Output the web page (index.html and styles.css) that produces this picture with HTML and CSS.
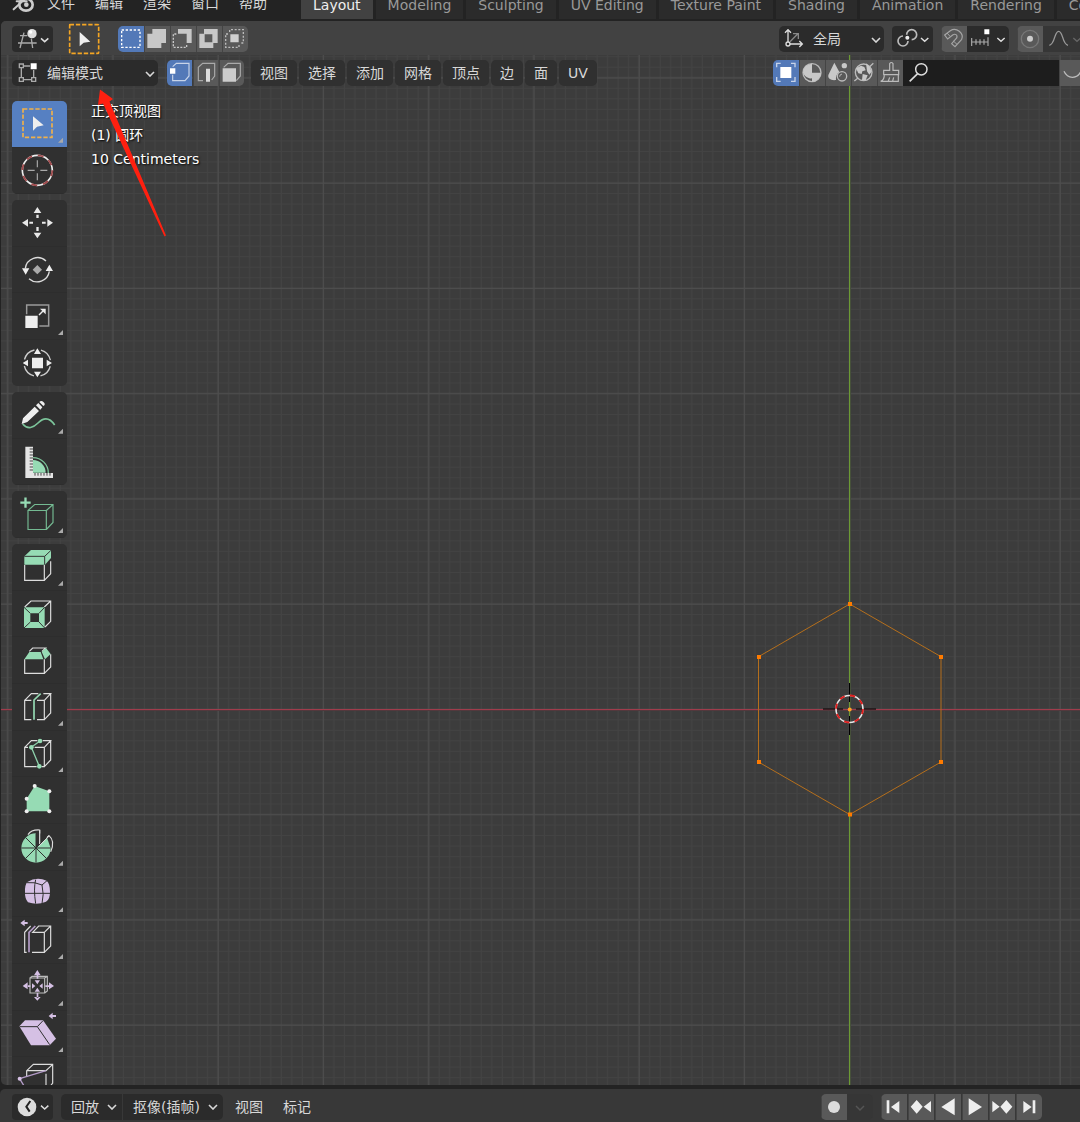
FILE: index.html
```html
<!DOCTYPE html>
<html lang="zh-CN">
<head>
<meta charset="utf-8">
<meta name="viewport" content="width=device-width, initial-scale=1">
<title>Blender</title>
<link rel="stylesheet" href="styles.css">
</head>
<body>
<svg class="defs" aria-hidden="true">
  <symbol id="chevron" viewBox="0 0 10 6"><path d="M1 1l4 4 4-4" fill="none" stroke="currentColor" stroke-width="1.6"/></symbol>
</svg>

<header class="topbar">
  <nav class="menus" aria-label="主菜单">
    <button class="menu logo" aria-label="Blender">
      <svg width="26" height="26" viewBox="36 -30 78 78"><path d="M41 28L74-2M50 4H80" fill="none" stroke="#ccc" stroke-width="6" stroke-linecap="round"/><ellipse cx="78" cy="14" rx="20" ry="18" fill="none" stroke="#ccc" stroke-width="8"/><circle cx="79" cy="14" r="7" fill="#ccc"/></svg>
    </button>
    <button class="menu">文件</button>
    <button class="menu">编辑</button>
    <button class="menu">渲染</button>
    <button class="menu">窗口</button>
    <button class="menu">帮助</button>
  </nav>
  <nav class="tabs" aria-label="工作区">
    <button class="tab active">Layout</button>
    <button class="tab">Modeling</button>
    <button class="tab">Sculpting</button>
    <button class="tab">UV Editing</button>
    <button class="tab">Texture Paint</button>
    <button class="tab">Shading</button>
    <button class="tab">Animation</button>
    <button class="tab">Rendering</button>
    <button class="tab">Compositing</button>
  </nav>
</header>

<main class="viewport">
  <svg class="scene" width="100%" height="100%" aria-hidden="true">
    <defs>
      <pattern id="minor" patternUnits="userSpaceOnUse" x="844.5" y="704" width="10.525" height="10.525"><path d="M5.2 0V10.6M0 5.2H10.6" stroke="#434343" stroke-width="1"/></pattern>
      <pattern id="major" patternUnits="userSpaceOnUse" x="799.7" y="659.4" width="105.25" height="105.25"><path d="M50 0V105.3M0 50H105.3" stroke="#4d4d4d" stroke-width="1.2"/></pattern>
    </defs>
    <g transform="translate(-1 -21)">
      <rect x="1" y="21" width="100%" height="100%" fill="url(#minor)"/>
      <rect x="1" y="21" width="100%" height="100%" fill="url(#major)"/>
      <rect x="0" y="709" width="4000" height="1" fill="#a03c4c"/>
      <rect x="0" y="710" width="4000" height="1" fill="#52393d"/>
      <rect x="849" y="0" width="1" height="4000" fill="#6c9a34"/>
      <rect x="850" y="0" width="1" height="4000" fill="#46503a"/>
      <path d="M849.7 604L941 656.7V762L849.7 814.5 758.5 762V656.7Z" fill="none" stroke="#b56f1c"/>
      <path d="M823 709H843M856 709H876" stroke="#1c1516" stroke-width="1.4"/>
      <path d="M849.5 683V702M849.5 716V735" stroke="#000"/>
      <circle cx="849.5" cy="709" r="13.5" fill="none" stroke="#e6e6e6" stroke-width="1.6"/>
      <circle cx="849.5" cy="709" r="13.5" fill="none" stroke="#e01c1c" stroke-width="1.8" stroke-dasharray="5.3 5.3"/>
      <path d="M848 602h4v4h-4zM939 655h4v4h-4zM939 760h4v4h-4zM848 812.500h4v4h-4zM757 760h4v4h-4zM757 655h4v4h-4z" fill="#ff7b00"/>
      <circle cx="849.7" cy="709.4" r="2" fill="#ffa028"/>
    </g>
  </svg>

  <div class="row settings">
    <button class="btn dark" aria-label="编辑器类型"><svg width="41" height="26" viewBox="36 78 123 78"><g fill="none" stroke="#aaa" stroke-width="4"><path d="M60 107H82M54 129H110M72 98L60 144M94 116L98 144"/></g><circle cx="96" cy="101" r="14" fill="#ddd"/><circle cx="92" cy="96" r="5" fill="#fff"/><path d="M123 115l11 10 11-10" fill="none" stroke="#ddd" stroke-width="4.500"/></svg></button>
    <button class="btn active-tool" aria-label="框选"><svg width="32" height="32" viewBox="204 67 96 96"><rect x="209" y="72" width="87" height="86" fill="none" stroke="#f5a623" stroke-width="5" stroke-dasharray="13 5.600"/><path d="M239 94V137L251 126 271 123Z" fill="#eee"/></svg></button>
    <div class="group modes">
      <button class="btn on" aria-label="设置"><svg width="26" height="26" viewBox="354 78 78 78"><rect x="365" y="90" width="55" height="52" fill="none" stroke="#fff" stroke-width="4" stroke-dasharray="7 5"/></svg></button>
      <button class="btn gray" aria-label="扩展"><svg width="26" height="26" viewBox="432 78 78 78"><path d="M457 87H498V129H484V144H442V101H457Z" fill="#c8c8c8"/></svg></button>
      <button class="btn gray" aria-label="减去"><svg width="26" height="26" viewBox="510 78 78 78"><path d="M534 87H575V129H560V101H534Z" fill="#c8c8c8"/><path d="M529 102H520V142H560V133" fill="none" stroke="#c8c8c8" stroke-width="4" stroke-dasharray="6 4"/></svg></button>
      <button class="btn gray" aria-label="反转"><svg width="26" height="26" viewBox="588 78 78 78"><path fill-rule="evenodd" d="M612 87H653V129H640V144H598V101H612ZM614 103V127H637V103Z" fill="#c8c8c8"/></svg></button>
      <button class="btn gray" aria-label="相交"><svg width="26" height="26" viewBox="666 78 78 78"><path d="M691 103H716V127H691Z" fill="#d0d0d0"/><path d="M689 96V89H730V129H722M684 102H677V142H717V134" fill="none" stroke="#bbb" stroke-width="4" stroke-dasharray="6 5"/></svg></button>
    </div>
    <div class="right">
      <label class="pick orientation">
        <svg width="24" height="26" viewBox="124 78 72 78" aria-hidden="true"><g fill="none" stroke="#ddd" stroke-width="4"><path d="M145 126V91M136 98L145 89 154 98M150 132H186M179 123L188 132 179 141"/><circle cx="145" cy="132" r="6"/></g><path d="M151 125L174 102M160 101H176V117" fill="none" stroke="#888" stroke-width="4"/></svg>
        <select aria-label="变换坐标系"><option>全局</option></select>
        <svg class="chev"><use href="#chevron"/></svg>
      </label>
      <button class="btn dark" aria-label="轴心点"><svg width="41" height="26" viewBox="457 78 123 78"><g fill="none" stroke="#bbb" stroke-width="5"><path d="M501 104A15 15 0 1 1 516 119M490 108A15 15 0 1 0 505 123"/></g><circle cx="503" cy="113" r="6" fill="#eee"/><path d="M544 114l11 10 11-10" fill="none" stroke="#ddd" stroke-width="4.500"/></svg></button>
      <div class="group">
        <button class="btn gray" aria-label="吸附"><svg width="26" height="26" viewBox="604 78 78 78"><path d="M615 105L632 92C650 80 674 100 666 118L646 140 636 131 651 114C655 104 646 100 639 105L624 117Z" fill="none" stroke="#a5a5a5" stroke-width="3.500"/><path d="M622 99L632 110M641 123L652 133" stroke="#a5a5a5" stroke-width="3"/></svg></button>
        <button class="btn dark" aria-label="吸附至"><svg width="42" height="26" viewBox="682 78 126 78"><path d="M695 126H746M696 114V138M709 118V134M721 118V134M733 118V134M745 112V138" stroke="#aaa" stroke-width="3.500"/><path d="M734 88H749V103H734Z" fill="#fff"/><path d="M773 114l11 10 11-10" fill="none" stroke="#ddd" stroke-width="4.500"/></svg></button>
      </div>
      <div class="group cut">
        <button class="btn gray" aria-label="比例化编辑"><svg width="26" height="26" viewBox="831 78 78 78"><circle cx="870" cy="117" r="26" fill="none" stroke="#777" stroke-width="4"/><circle cx="870" cy="116" r="9" fill="#ccc"/></svg></button>
        <button class="btn faded" aria-label="衰减"><svg width="37" height="26" viewBox="909 78 111 78"><path d="M928 136C946 132 942 94 956 94S966 132 984 136" fill="none" stroke="#999" stroke-width="4"/><path d="M1000 114l11 10 11-10" fill="none" stroke="#666" stroke-width="4"/></svg></button>
      </div>
    </div>
  </div>

  <div class="row header">
    <label class="pick mode">
      <svg width="26" height="26" viewBox="45 180 78 78" aria-hidden="true"><g fill="none" stroke="#aaa" stroke-width="4"><path d="M58 192h12v11H58zM58 233h12v11H58zM95 233h12v11H95zM64 205V231M72 239H93M101 210V231M72 198H90"/></g><path d="M92 190H110V208H92Z" fill="#fff"/></svg>
      <select aria-label="模式"><option>编辑模式</option></select>
      <svg class="chev"><use href="#chevron"/></svg>
    </label>
    <div class="group selmode">
      <button class="btn on" aria-label="顶点选择"><svg width="25" height="26" viewBox="499 180 75 78"><path d="M516 200L527 190H565V228L553 242H516V224" fill="none" stroke="#c7d3e8" stroke-width="3.500"/><path d="M508 205H524V221H508Z" fill="#fff"/></svg></button>
      <button class="btn gray" aria-label="边选择"><svg width="25" height="26" viewBox="576 180 75 78"><path d="M606 242H592V202L605 190H641V228L632 240" fill="none" stroke="#aaa" stroke-width="3.500"/><path d="M615 206H627V245H615Z" fill="#ddd"/></svg></button>
      <button class="btn gray" aria-label="面选择"><svg width="25" height="26" viewBox="654 180 75 78"><path d="M668 202L681 190H718V228L706 242" fill="none" stroke="#aaa" stroke-width="3.500"/><path d="M665 205H705V245H665Z" fill="#ccc"/></svg></button>
    </div>
    <nav class="view-menus" aria-label="视图菜单">
      <button class="vmenu">视图</button>
      <button class="vmenu">选择</button>
      <button class="vmenu">添加</button>
      <button class="vmenu">网格</button>
      <button class="vmenu">顶点</button>
      <button class="vmenu">边</button>
      <button class="vmenu">面</button>
      <button class="vmenu">UV</button>
    </nav>
    <div class="right joined">
      <button class="btn on first" aria-label="物体"><svg width="26" height="26" viewBox="98 180 78 78"><path d="M109 202V190H121M152 190H164V202M164 231V244H152M121 244H109V231" fill="none" stroke="#c7d3e8" stroke-width="4"/><path d="M120 201H153V234H120Z" fill="#fff"/></svg></button>
      <button class="btn gray" aria-label="材质"><svg width="26" height="26" viewBox="176 180 78 78"><circle cx="215" cy="218" r="27" fill="none" stroke="#bbb" stroke-width="4"/><path d="M215 218V191A27 27 0 0 0 188 218ZM215 218H242A27 27 0 0 1 215 245ZM215 191A27 27 0 0 0 188 218C194 232 208 236 215 235Z" fill="#c8c8c8"/></svg></button>
      <button class="btn gray" aria-label="场景"><svg width="26" height="26" viewBox="254 180 78 78"><path d="M282 188L297 216C288 222 286 232 287 240C272 242 262 236 264 225Z" fill="#c8c8c8"/><circle cx="312" cy="197" r="8" fill="#c8c8c8"/><circle cx="305" cy="229" r="14" fill="none" stroke="#bbb" stroke-width="4"/><path d="M298 230A8 8 0 0 1 305 222" fill="none" stroke="#bbb" stroke-width="3"/></svg></button>
      <button class="btn gray" aria-label="世界"><svg width="26" height="26" viewBox="332 180 78 78"><circle cx="370" cy="217" r="25" fill="none" stroke="#bbb" stroke-width="4"/><path d="M342 243L354 233M387 201L399 190" stroke="#bbb" stroke-width="4"/><path d="M347 205L362 197 372 201 376 211 366 214 364 222 354 220ZM377 190L388 200 394 215 387 224 380 214ZM367 222L382 226 376 241 365 240Z" fill="#c8c8c8"/></svg></button>
      <button class="btn gray" aria-label="笔刷"><svg width="26" height="26" viewBox="410 180 78 78"><path d="M448 211V191Q453 184 458 191V211H475V224H430V211ZM432 226C431 238 427 242 421 244H474V226M444 243L448 232M457 243L460 232" fill="none" stroke="#bbb" stroke-width="3.500"/></svg></button>
      <label class="search">
        <svg width="30" height="26" viewBox="488 180 90 78" aria-hidden="true"><circle cx="543" cy="208" r="17" fill="none" stroke="#ddd" stroke-width="4.500"/><path d="M532 221L508 244" stroke="#ddd" stroke-width="5"/></svg>
        <input type="search" aria-label="搜索">
      </label>
      <button class="btn gray" aria-label="下拉"><svg width="21" height="26" viewBox="956 180 63 78"><path d="M971 214C982 238 1010 238 1022 214" fill="none" stroke="#bbb" stroke-width="4"/></svg></button>
    </div>
  </div>

  <div class="body">
    <div class="shelf" role="toolbar" aria-label="工具栏">
      <div class="tools two">
        <button class="tool on more" aria-label="框选工具"><svg viewBox="36 33 162 140"><rect x="69" y="57" width="87" height="85" fill="none" stroke="#f0b04a" stroke-width="5" stroke-dasharray="13 5.500"/><path d="M99 79V122L111 110 131 106Z" fill="#eee"/></svg></button>
        <button class="tool" aria-label="游标"><svg viewBox="36 173 162 140"><circle cx="112" cy="240" r="45" fill="none" stroke="#eee" stroke-width="5"/><circle cx="112" cy="240" r="45" fill="none" stroke="#a04a4c" stroke-width="5.500" stroke-dasharray="17.670 17.670"/><path d="M83 240H104M121 240H142M112 210V231M112 249V270" stroke="#aaa" stroke-width="3.500"/></svg></button>
      </div>
      <div class="tools four">
        <button class="tool" aria-label="移动"><svg viewBox="36 330 162 140"><path d="M101 369L112 351 124 369ZM101 428L112 445 124 428ZM84 387L66 398 84 410ZM142 387L159 398 142 410ZM109 374H116V384H109ZM109 411H116V423H109ZM88 395H99V401H88ZM126 395H137V401H126Z" fill="#e8e8e8"/></svg></button>
        <button class="tool" aria-label="旋转"><svg viewBox="36 470 162 140"><path d="M76 534A37 37 0 0 1 138 512M148 543A37 37 0 0 1 87 565" fill="none" stroke="#ddd" stroke-width="4"/><path d="M66 534H88L77 553ZM137 542H159L148 523Z" fill="#eee"/><path d="M112 524L126 538 112 552 98 538Z" fill="#aaa"/></svg></button>
        <button class="tool more" aria-label="缩放"><svg viewBox="36 9 162 140"><path d="M80 73V45H146V108H118" fill="none" stroke="#999" stroke-width="4.500"/><path d="M76 77H113V114H76Z" fill="#eee"/><path d="M117 75L129 63" stroke="#eee" stroke-width="4"/><path d="M120 56H137V73Z" fill="#eee"/></svg></button>
        <button class="tool" aria-label="变换"><svg viewBox="36 148 162 140"><circle cx="112" cy="217" r="40" fill="none" stroke="#ccc" stroke-width="4" stroke-dasharray="42.800 20" stroke-dashoffset="-10"/><path d="M96 201H129V233H96ZM102 190L112 173 123 190ZM102 243L112 260 123 243ZM84 207L68 217 84 227ZM140 207L156 217 140 227Z" fill="#eee"/></svg></button>
      </div>
      <div class="tools two">
        <button class="tool more" aria-label="标注"><svg viewBox="36 306 162 140"><path d="M68 402C84 420 100 413 114 399S146 378 164 405" fill="none" stroke="#7cc49a" stroke-width="5"/><path d="M65 402L69 385 104 350 117 363 82 396ZM108 346L115 339 127 352 121 359ZM118 336Q124 330 131 337T130 348Z" fill="#eee"/></svg></button>
        <button class="tool" aria-label="测量"><svg viewBox="36 446 162 140"><path d="M99 509A38 38 0 0 1 137 547H99Z" fill="#96dbb4"/><path d="M99 502A46 46 0 0 1 145 548" fill="none" stroke="#7cc49a" stroke-width="4"/><path d="M76 469H99V548H159V563H76Z" fill="#e4e4e4"/><path d="M89 476H99M89 485H99M89 494H99M89 503H99M89 512H99M89 521H99M89 530H99M89 539H99M105 548V556M114 548V556M123 548V556M132 548V556M141 548V556M150 548V556" stroke="#444" stroke-width="3"/></svg></button>
      </div>
      <div class="tools one">
        <button class="tool more" aria-label="添加立方体"><svg viewBox="36 603 162 140"><path d="M84 661H139V718H84ZM84 661L104 643H159V697L139 718M139 661L159 643" fill="none" stroke="#74ba92" stroke-width="3.500"/><path d="M73 622H80V634H92V641H80V653H73V641H61V634H73Z" fill="#96dbb4"/></svg></button>
      </div>
      <div class="tools many">
        <button class="tool more" aria-label="挤出选区"><svg viewBox="36 12 162 140"><path d="M74 75V121H133V75M133 121L152 101V64" fill="none" stroke="#ddd" stroke-width="3.500"/><path d="M73 49L93 30H153V54L135 74H73Z" fill="#96dbb4"/><path d="M73 49H134L153 31M134 49V74" fill="none" stroke="#333" stroke-width="3"/></svg></button>
        <button class="tool" aria-label="内插面"><svg viewBox="36 152 162 140"><path d="M74 200L93 182H152V243L135 260M133 200L152 182" fill="none" stroke="#ddd" stroke-width="3.500"/><path fill-rule="evenodd" d="M72 201H134V263H72ZM91 219V245H117V219Z" fill="#96dbb4"/><path d="M72 201L91 219M134 201L117 219M72 263L91 245M134 263L117 245" stroke="#333" stroke-width="3"/></svg></button>
        <button class="tool" aria-label="倒角"><svg viewBox="36 292 162 140"><path d="M74 359V401H133V359M133 401L152 382V344M88 335L98 325H137L126 335" fill="none" stroke="#ddd" stroke-width="3.500"/><path d="M88 337H122L130 359H73ZM125 336L138 325 152 343 135 359Z" fill="#96dbb4"/></svg></button>
        <button class="tool more" aria-label="环切"><svg viewBox="36 432 162 140"><path d="M94 481H74V539H94M74 481L94 461H115M111 481H133V539H111M133 481L152 461H130M152 461V519L133 539" fill="none" stroke="#ddd" stroke-width="3.500"/><path d="M102 539V480L122 461" fill="none" stroke="#96dbb4" stroke-width="5"/></svg></button>
        <button class="tool more" aria-label="切割"><svg viewBox="36 572 162 140"><path d="M84 621H74V679H110M74 621L94 601H112M104 621H133V679H125M133 621L152 601H128M152 601V659L133 679" fill="none" stroke="#ddd" stroke-width="3.500"/><path d="M120 602L94 621 118 678" fill="none" stroke="#8ccfaa" stroke-width="4"/><g fill="#96dbb4"><circle cx="120" cy="602" r="7"/><circle cx="94" cy="621" r="7"/><circle cx="118" cy="678" r="7"/></g></svg></button>
        <button class="tool" aria-label="多边形建形"><svg viewBox="36 712 162 140"><path d="M104 739L148 755V815H80V777Z" fill="#96dbb4"/><g fill="#eee"><circle cx="104" cy="739" r="6"/><circle cx="148" cy="755" r="6"/><circle cx="148" cy="815" r="6"/><circle cx="80" cy="815" r="6"/><circle cx="80" cy="777" r="6"/></g></svg></button>
        <button class="tool more" aria-label="旋绕"><svg viewBox="36 42 162 140"><path d="M84 74C91 63 103 59 119 60V105M119 105L147 77C159 87 162 103 152 125" fill="none" stroke="#ddd" stroke-width="3.500"/><path d="M108 114V70A44 44 0 1 0 152 114L141 83Z" fill="#96dbb4"/><path d="M108 114L142 79 110 66Z" fill="#303030"/><path d="M119 60V105L147 77" fill="none" stroke="#ddd" stroke-width="3.500"/><path d="M108 70V158M64 114H152M77 83L139 145M77 145L140 82" stroke="#303030" stroke-width="3"/></svg></button>
        <button class="tool more" aria-label="光滑"><svg viewBox="36 182 162 140"><path d="M82 215Q110 197 140 211Q150 220 150 245Q150 268 138 274Q112 285 84 276Q74 264 75 245Q74 224 82 215Z" fill="#d5c0e4"/><path d="M75 249H151M81 217Q105 214 126 224L141 211M107 208Q100 235 107 280M126 224Q133 252 126 280" fill="none" stroke="#303030" stroke-width="3"/></svg></button>
        <button class="tool more" aria-label="滑移边线"><svg viewBox="36 322 162 140"><path d="M80 428H74V368L92 349M96 428H133V368H98L116 349H152V409L133 428M133 368L152 349" fill="none" stroke="#ddd" stroke-width="3.500"/><path d="M87 428V368L106 349" fill="none" stroke="#b49cc8" stroke-width="5"/><path d="M61 340L74 330V337H83V343H74V350Z" fill="#d5c0e4"/></svg></button>
        <button class="tool more" aria-label="法向缩放"><svg viewBox="36 462 162 140"><path d="M90 504H134V549H90ZM90 504L96 499H142V543L134 549M134 504L142 499" fill="none" stroke="#bbb" stroke-width="3.500"/><path d="M102 496L112 480 122 496ZM102 561L112 572 122 561ZM83 517L68 528 83 538ZM147 517L162 528 147 538ZM110 494H115V506H110ZM110 549H115V563H110ZM82 526H91V531H82ZM136 526H148V531H136ZM104 511H120L112 523ZM104 545H120L112 533ZM96 520V536L106 528ZM128 520V536L118 528Z" fill="#d5c0e4"/></svg></button>
        <button class="tool more" aria-label="切变"><svg viewBox="36 602 162 140"><path d="M58 648L75 630H129L168 685 149 705H93Z" fill="#d5c0e4"/><path d="M59 649H112L149 703M112 649L129 631" fill="none" stroke="#303030" stroke-width="3"/><path d="M146 617L158 607V614H168V620H158V627Z" fill="#d5c0e4"/></svg></button>
        <button class="tool" aria-label="断离区域"><svg viewBox="36 742 162 140"><path d="M80 800V783L100 764H158V820L142 842M80 783H138L158 764M138 792V842" fill="none" stroke="#ddd" stroke-width="3.500"/><path d="M59 807L138 783M59 807L80 842" stroke="#b49cc8" stroke-width="4"/><circle cx="59" cy="807" r="6" fill="#d5c0e4"/></svg></button>
      </div>
    </div>
    <div class="info">
      <p>正交顶视图</p>
      <p>(1) 圆环</p>
      <p>10 Centimeters</p>
    </div>
  </div>
  <svg class="pointer" width="70" height="148" viewBox="97 89 70 148" aria-hidden="true"><path d="M100 89.500L113 99 109.500 101.500 166 235.500 164.500 236.500 103 103.500 98 105Z" fill="#ff2010"/></svg>
</main>

<footer class="timeline">
  <button class="btn dark" aria-label="时间线"><svg width="41" height="26" viewBox="36 72 123 78"><circle cx="81" cy="111" r="28" fill="#ddd"/><path d="M91 93L79 110 89 125" fill="none" stroke="#222" stroke-width="6"/><path d="M123 107l11 10 11-10" fill="none" stroke="#ddd" stroke-width="4.500"/></svg></button>
  <div class="group drop-group">
    <button class="drop">回放<svg class="chev"><use href="#chevron"/></svg></button>
    <button class="drop">抠像(插帧)<svg class="chev"><use href="#chevron"/></svg></button>
  </div>
  <button class="plain">视图</button>
  <button class="plain">标记</button>
  <div class="transport">
    <div class="group">
      <button class="btn gray" aria-label="自动插帧"><svg width="26" height="26" viewBox="0 0 26 26"><circle cx="13" cy="13" r="6" fill="#ddd"/></svg></button>
      <button class="btn faded" aria-label="插帧选项"><svg width="26" height="26" viewBox="0 0 26 26"><path d="M9 12l4 4 4-4" fill="none" stroke="#555" stroke-width="1.500"/></svg></button>
    </div>
    <div class="group play">
      <button class="btn gray" aria-label="首帧"><svg width="26" height="26" viewBox="306 72 78 78"><path d="M323 91H331V130H323ZM361 93V129L336 111Z" fill="#eee"/></svg></button>
      <button class="btn gray" aria-label="上一关键帧"><svg width="26" height="26" viewBox="384 72 78 78"><path d="M392 110L410 90 428 110 410 131ZM453 93V127L431 110Z" fill="#eee"/></svg></button>
      <button class="btn gray" aria-label="倒放"><svg width="26" height="26" viewBox="465 72 78 78"><path d="M524 85V136L484 111Z" fill="#eee"/></svg></button>
      <button class="btn gray" aria-label="播放"><svg width="26" height="26" viewBox="545 72 78 78"><path d="M565 85V136L605 111Z" fill="#eee"/></svg></button>
      <button class="btn gray" aria-label="下一关键帧"><svg width="26" height="26" viewBox="627 72 78 78"><path d="M637 93V127L659 110ZM661 110L679 90 697 110 679 131Z" fill="#eee"/></svg></button>
      <button class="btn gray" aria-label="末帧"><svg width="26" height="26" viewBox="707 72 78 78"><path d="M729 93V129L754 111ZM757 91H765V130H757Z" fill="#eee"/></svg></button>
    </div>
  </div>
</footer>
</body>
</html>
```
FILE: styles.css
```css
* { box-sizing: border-box; }

body {
  margin: 0;
  height: 100vh;
  display: flex;
  flex-direction: column;
  overflow: hidden;
  background: #232323;
  color: #d8d8d8;
  font: 14px/20px "DejaVu Sans", "Noto Sans CJK SC", sans-serif;
}

button, select, input {
  margin: 0;
  padding: 0;
  border: 0;
  background: none;
  color: inherit;
  font: inherit;
}

svg { display: block; flex: none; }
.defs { position: absolute; width: 0; height: 0; }
.chev { width: 10px; height: 6px; }

/* Top bar */
.topbar {
  flex: none;
  display: flex;
  align-items: flex-end;
  height: 20px;
  padding-bottom: 1px;
  overflow: hidden;
  white-space: nowrap;
}
.menus {
  display: flex;
  align-items: center;
  gap: 20px;
  height: 32px;
  padding-left: 12px;
  margin-right: 34px;
}
.logo { margin-right: -11px; }
.tabs { display: flex; gap: 3px; }
.tab {
  height: 28px;
  padding: 0 12px;
  background: #2b2b2b;
  color: #999;
}
.tab.active { background: #424242; color: #eee; }

/* 3D viewport */
.viewport {
  position: relative;
  flex: 1;
  min-height: 0;
  display: flex;
  flex-direction: column;
  margin: 1px 0 4px 1px;
  border-radius: 5px 0 0 5px;
  background: #3c3c3c;
  overflow: hidden;
}
.scene { position: absolute; inset: 0; }
.row {
  position: relative;
  flex: none;
  display: flex;
  align-items: center;
  height: 34px;
  padding: 2px 0 0 11px;
  white-space: nowrap;
}
.settings { background: #424242; }
.right { display: flex; gap: 8px; margin-left: auto; }
.joined { gap: 0; }

.btn {
  flex: none;
  display: flex;
  align-items: center;
  justify-content: center;
  height: 26px;
  border-radius: 4px;
  overflow: hidden;
}
.dark { background: #2b2b2b; }
.gray { background: #595959; }
.on { background: #5379b8; }
.faded { background: #363636; }
.active-tool { height: 32px; margin: 0 18px 0 15px; }

.group { display: flex; border-radius: 5px; overflow: hidden; }
.group .btn { border-radius: 0; }
.group .gray, .joined .gray { box-shadow: inset 1px 0 #444; }
.cut { border-radius: 5px 0 0 5px; }
.joined .btn { border-radius: 0; }
.joined .first { border-radius: 5px 0 0 5px; }

.pick {
  position: relative;
  display: flex;
  align-items: center;
  height: 26px;
  border-radius: 5px;
  background: #2b2b2b;
}
.pick select { flex: 1; appearance: none; height: 26px; outline: 0; }
.pick .chev { position: absolute; right: 3px; top: 11px; pointer-events: none; }
.mode { width: 146px; padding-left: 3px; margin-right: 9px; }
.mode select { padding-left: 6px; }
.orientation { width: 105px; padding-left: 2px; }
.orientation select { padding-left: 8px; }
.selmode { gap: 1px; margin-right: 7px; }

.view-menus { display: flex; gap: 2px; }
.vmenu {
  height: 26px;
  padding: 0 9px;
  border-radius: 5px;
  background: #303030;
}

.search {
  display: flex;
  align-items: center;
  width: 156px;
  background: #1d1d1d;
}
.search input { flex: 1; min-width: 0; height: 26px; outline: 0; }

.body {
  position: relative;
  flex: 1;
  min-height: 0;
  display: flex;
  align-items: flex-start;
  gap: 24px;
  padding: 12px 0 0 11px;
}
.shelf { display: flex; flex-direction: column; gap: 6px; }
.tools {
  display: grid;
  grid-auto-rows: 1fr;
  width: 55px;
  border-radius: 5px;
  background: #303030;
  overflow: hidden;
}
.one { height: 47px; }
.two { height: 93px; }
.four { height: 186px; }
.many { height: 560px; }
.tool { position: relative; box-shadow: inset 0 -1px #2d2d2d; }
.tool svg { width: 54px; height: 100%; }
.tool.on { background: #5680c2; }
.more::after {
  content: "";
  position: absolute;
  right: 4px;
  bottom: 5px;
  width: 5px;
  height: 5px;
  background: #aaa;
  clip-path: polygon(100% 0, 100% 100%, 0 100%);
}
.info {
  color: #fff;
  line-height: 24px;
  margin-top: -2px;
  text-shadow: 1px 1px 2px #000;
}
.info p { margin: 0; }
.pointer { position: absolute; left: 96px; top: 68px; }

/* Timeline */
.timeline {
  flex: none;
  display: flex;
  align-items: center;
  height: 33px;
  padding: 2px 38px 0 12px;
  border-radius: 5px 0 0 0;
  background: #383838;
  white-space: nowrap;
}
.drop-group { gap: 1px; margin: 0 12px 0 8px; }
.drop {
  display: flex;
  align-items: center;
  gap: 8px;
  height: 26px;
  padding: 0 5px 0 10px;
  background: #2b2b2b;
}
.plain { margin-right: 20px; }
.transport { display: flex; gap: 8px; margin-left: auto; }
.play { gap: 1px; }
```
